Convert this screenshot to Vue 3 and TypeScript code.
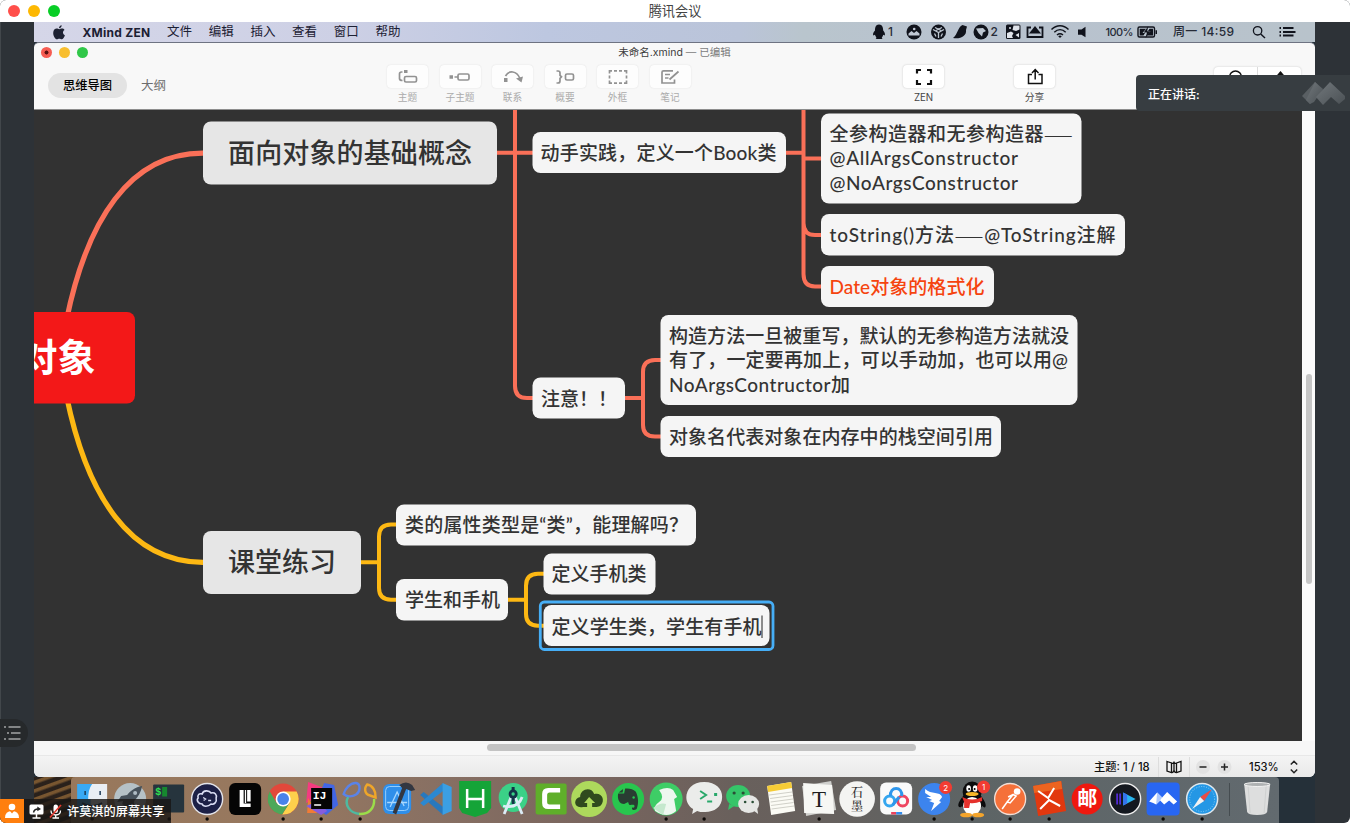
<script setup lang="ts">
interface Line { text: string; y: number; w: number }
interface Topic {
  x: number; y: number; w: number; h: number
  tx: number; size: number; kind: 'main' | 'sub' | 'root' | 'alert'
  lines: Line[]
}

const menus: string[] = ['文件', '编辑', '插入', '查看', '窗口', '帮助']

/* Splits a line so that long dashes can take the CJK face. */
const runs = (text: string): string[] => text.split(/(——)/).filter((s) => s.length > 0)

const topics: Topic[] = [
  { x: 203, y: 121.5, w: 294, h: 63, tx: 228, size: 27, kind: 'main', lines: [{ text: '面向对象的基础概念', y: 163, w: 244 }] },
  { x: 532.5, y: 132, w: 253.5, h: 41, tx: 540.5, size: 19, kind: 'sub', lines: [{ text: '动手实践，定义一个Book类', y: 159.7, w: 236 }] },
  {
    x: 821, y: 113.5, w: 260.5, h: 90, tx: 829.5, size: 19, kind: 'sub',
    lines: [
      { text: '全参构造器和无参构造器——', y: 140.8, w: 243 },
      { text: '@AllArgsConstructor', y: 165.4, w: 188.5 },
      { text: '@NoArgsConstructor', y: 190, w: 188.5 },
    ],
  },
  { x: 821, y: 214, w: 304, h: 41.5, tx: 829.5, size: 19, kind: 'sub', lines: [{ text: 'toString()方法——@ToString注解', y: 242, w: 286 }] },
  { x: 821, y: 266, w: 173, h: 41, tx: 829.5, size: 19, kind: 'alert', lines: [{ text: 'Date对象的格式化', y: 294, w: 155 }] },
  {
    x: 660.5, y: 315, w: 417, h: 90, tx: 669, size: 19, kind: 'sub',
    lines: [
      { text: '构造方法一旦被重写，默认的无参构造方法就没', y: 343, w: 400 },
      { text: '有了，一定要再加上，可以手动加，也可以用@', y: 367.4, w: 399 },
      { text: 'NoArgsContructor加', y: 391.8, w: 181 },
    ],
  },
  { x: 660.5, y: 416, w: 340.5, h: 41, tx: 669, size: 19, kind: 'sub', lines: [{ text: '对象名代表对象在内存中的栈空间引用', y: 443.6, w: 324 }] },
  { x: 532.5, y: 377.5, w: 92.5, h: 41, tx: 541, size: 19, kind: 'sub', lines: [{ text: '注意！！', y: 405.6, w: 76 }] },
  { x: 203, y: 531, w: 158, h: 63, tx: 228, size: 27, kind: 'main', lines: [{ text: '课堂练习', y: 572, w: 108 }] },
  { x: 396, y: 504.5, w: 300, h: 41, tx: 405, size: 19, kind: 'sub', lines: [{ text: '类的属性类型是“类”，能理解吗？', y: 532, w: 283 }] },
  { x: 396, y: 579, w: 112, h: 41.5, tx: 405, size: 19, kind: 'sub', lines: [{ text: '学生和手机', y: 607, w: 95 }] },
  { x: 543.5, y: 553.5, w: 112, h: 41, tx: 551.5, size: 19, kind: 'sub', lines: [{ text: '定义手机类', y: 581, w: 95 }] },
  { x: 543.5, y: 605, w: 226, h: 41, tx: 551.5, size: 19, kind: 'sub', lines: [{ text: '定义学生类，学生有手机', y: 634, w: 210 }] },
  { x: 20, y: 312, w: 115, h: 91.5, tx: 19.5, size: 38, kind: 'root', lines: [{ text: '对象', y: 371, w: 76 }] },
]
</script>

<template>
  <div class="meeting">
    <header class="titlebar">
      <div class="lights"><i class="red" /><i class="yellow" /><i class="green" /></div>
      <span class="title">腾讯会议</span>
    </header>

    <div class="stage">
      <main class="screen">
        <!-- system menu bar -->
        <div class="menubar">
          <svg class="apple" viewBox="0 0 12 15"><path d="M8.7 0.3C8.7 2 7.4 3.3 6 3.3 5.9 1.8 7.2 0.5 8.7 0.3ZM6.2 4.2C7 4.2 7.8 3.5 9 3.5 10 3.5 11 4 11.5 4.9 9.3 6.2 9.7 9.3 11.9 10.2 11.3 12 10 14.3 8.7 14.3 7.8 14.3 7.4 13.8 6.3 13.8 5.200 13.800 4.800 14.300 3.900 14.300 2.200 14.300 0.200 11 0.200 8 0.200 5.100 2 3.600 3.700 3.600 4.800 3.600 5.600 4.200 6.200 4.200Z" /></svg>
          <b class="app-name">XMind ZEN</b>
          <span v-for="m in menus" :key="m" class="menu">{{ m }}</span>
          <svg class="status" viewBox="865 22 450 20">
            <g fill="#10131c">
              <path d="M879 24.500C875.500 24.500 875 28 875 30.500 873.500 32 872.500 34 873.300 35.600L875 34.800C875.200 36 876 37 876.500 37.500 875.500 38 875.500 39 877 39H881.500C882.800 39 882.500 38 881.700 37.500 882.500 37 883 36 883.200 34.800L884.700 35.600C885.500 34 884.500 32 883.200 30.500 883.200 28 882.500 24.500 879 24.500Z" />
              <circle cx="914" cy="32" r="7.500" />
              <circle cx="938.500" cy="32" r="7.500" />
              <path d="M953 38C958 34 957.500 27.500 962.500 25L967 26.500 966 30C967 36 960 39.500 953 38Z" />
              <circle cx="981" cy="32" r="7.500" />
              <rect x="1006" y="24.500" width="14.500" height="14.500" rx="1.500" />
              <path d="M1078 29.500H1081.500L1085.500 26.800V37.300L1081.500 34.800H1078Z" />
            </g>
            <path d="M908.500 35.500V33.500L911.500 31 914 33 916.500 31 919.500 33.500V35.500Z" fill="#c0c8d4" /><circle cx="914.200" cy="29" r="1.300" fill="#c0c8d4" />
            <g fill="none" stroke="#bdc6d1" stroke-width="1.300">
              <path d="M933 29.500L938.500 32.500 944 29.500M938.500 32.500V38M935 27.500L941 30.500M942 27.500L936 30.500M934.500 33.500L936 36.500M942.500 33.500L941 36.500" />
            </g>
            <path d="M976 28.500L983 28 986 31 983 32.500 982 36.500 978.500 33Z" fill="#bdc6d1" />
            <path d="M1013.500 25.500H1019.500V29.500L1016 31 1012.500 30ZM1007 33L1011 31.500 1013.500 33 1012 36 1013 38H1007ZM1015.500 35L1019 33V37.500Z" fill="#dfe3ea" />
            <circle cx="1010" cy="28" r="1" fill="#dfe3ea" />
            <path d="M1031 27.500H1027.500V37H1042.500V27.500H1039" fill="none" stroke="#10131c" stroke-width="1.800" />
            <path d="M1035 26L1041 33.500H1029Z" fill="#10131c" />
            <g fill="none" stroke="#10131c" stroke-width="1.500">
              <path d="M1051.500 29.500C1056.500 24.500 1063.500 24.500 1068.500 29.500M1054.300 32.300C1057.800 29 1062.300 29 1065.700 32.300M1057 35C1059 33.300 1061 33.300 1063 35" />
            </g>
            <path d="M1058.200 36.200Q1060 34.800 1061.800 36.200L1060 38Z" fill="#10131c" />
            <rect x="1138" y="27" width="16.500" height="10" rx="1.500" fill="none" stroke="#10131c" stroke-width="1.400" />
            <path d="M1139.700 28.700H1146L1142.500 33H1145L1143.500 35.400H1139.700ZM1149.500 28.700H1153V35.400H1146.500L1150.500 31H1148ZM1155.500 30.200H1157V34H1155.500Z" fill="#10131c" />
            <path d="M1148.300 26L1143.800 32.500H1147L1145.500 38L1150.500 31.300H1147.200Z" fill="#10131c" />
            <circle cx="1257.600" cy="30.800" r="4.200" fill="none" stroke="#10131c" stroke-width="1.300" /><path d="M1260.700 34L1265 38" stroke="#10131c" stroke-width="1.500" />
            <path d="M1279.500 28H1281M1279.500 32H1281M1279.500 35.500H1281M1283 28H1293.500M1283 32H1295.500M1283 35.500H1293.500" stroke="#10131c" stroke-width="1.800" />
            <g class="status-text">
              <text x="888" y="36" font-size="12">1</text>
              <text x="990.500" y="36" font-size="12">2</text>
              <text x="1105.500" y="35.500" font-size="11" textLength="28">100%</text>
              <text x="1173" y="36" font-size="12" textLength="61">周一 14:59</text>
            </g>
          </svg>
        </div>

        <!-- mind map window -->
        <section class="window">
          <div class="doc-title">
            <div class="doc-lights"><i class="red" /><i class="yellow" /><i class="green" /></div>
            <span class="doc-name">未命名.xmind <em>— 已编辑</em></span>
          </div>
          <div class="toolbar">
            <span class="pill">思维导图</span>
            <span class="outline">大纲</span>
            <div class="tools">
              <div class="tool"><div class="btn"><svg viewBox="0 0 20 14"><path d="M4.500 2H3.500Q1.500 2 1.500 4V8.500Q1.500 10.500 4.500 10.500" /><path d="M6 0H9.500V3H6Z" class="solid" /><rect x="6.500" y="6.500" width="12" height="5.500" rx="1.500" /></svg></div><span>主题</span></div>
              <div class="tool"><div class="btn"><svg viewBox="0 0 20 14"><path d="M-0.500 5.300H3V8.700H-0.500Z" class="solid" /><path d="M4.500 7H8" /><rect x="8" y="4" width="11" height="6" rx="1.500" /></svg></div><span>子主题</span></div>
              <div class="tool"><div class="btn"><svg viewBox="0 0 20 14"><path d="M1 8H4.500V12H1Z" class="solid" /><path d="M2.500 6C6 0 13.500 0.500 17 8.500" /><path d="M13 8.500L20 6.500 18.500 12.500Z" class="solid" /></svg></div><span>联系</span></div>
              <div class="tool"><div class="btn"><svg viewBox="0 0 20 14"><path d="M1.500 1H3Q5 1 5 3V5.300L6.500 6.800 5 8.300V11Q5 13 3 13H1.500" /><rect x="10.500" y="4" width="8" height="6" rx="1.500" /></svg></div><span>概要</span></div>
              <div class="tool"><div class="btn"><svg viewBox="0 0 20 14"><path d="M1.500 3.500V0.800H4M16 0.800H18.500V3.500M18.500 10.500V13.200H16M4 13.200H1.500V10.500M6 0.800H9M11 0.800H14M6 13.200H9M11 13.200H14M1.500 5.500V8.500M18.500 5.500V8.500" /></svg></div><span>外框</span></div>
              <div class="tool"><div class="btn"><svg viewBox="0 0 20 14"><path d="M13 0.800H3.500Q2 0.800 2 2.300V13H14.500V9.500M5 4.500H10M5 8H8.500M9.500 9.500L18.500 1.500" /></svg></div><span>笔记</span></div>
            </div>
            <div class="tool zen dark"><div class="btn"><svg viewBox="0 0 20 14"><path d="M3 3.500V0H7M13 0H17V3.500M17 10V14H13M7 14H3V10" class="heavy" /></svg></div><span>ZEN</span></div>
            <div class="tool share dark"><div class="btn"><svg viewBox="0 0 20 14"><path d="M7 4.500H3.500V13.500H17V4.500H13.500M10.200 9.500V0M7 3L10.200-0.500 13.500 3" /></svg></div><span>分享</span></div>
            <div class="pair">
              <svg viewBox="0 0 87 24"><path d="M43.500 0V24" stroke="#dcdcdc" /><circle cx="21.500" cy="10" r="6" fill="none" stroke="#111" stroke-width="1.500" /><path d="M61 10.500L66.500 4 72 10.500Z" fill="#111" /></svg>
            </div>
          </div>

          <div class="workspace">
            <svg class="canvas" viewBox="34 110 1268 631">
              <g fill="none" stroke="#fa7058" stroke-width="4">
                <path stroke-width="5.200" d="M66.500 320C87 220 130 153 203 153.200" />
                <path d="M497 152.800H533M515 105V386Q515 398 527 398H533M786 152.800H803.500M803.500 105V274Q803.500 286.500 815 286.500H821M803.500 158.500H821M803.500 223Q803.500 235 815 235H821" />
                <path d="M625 398H643M661 360H655Q643 360 643 372V425Q643 436.500 655 436.500H661" />
              </g>
              <g fill="none" stroke="#fdb813" stroke-width="4">
                <path stroke-width="5.200" d="M66.500 396C87 496 130 562 203 562.300" />
                <path d="M361 562.300H379M396 524.500H391Q379 524.500 379 536.500V588Q379 599.700 391 599.700H396M508 599.700H526M544 573.700H538Q526 573.700 526 585.700V614Q526 625.700 538 625.700H544" />
              </g>
              <g v-for="(t, i) in topics" :key="i" :class="['topic', t.kind]">
                <rect :x="t.x" :y="t.y" :width="t.w" :height="t.h" rx="8" />
                <text v-for="l in t.lines" :key="l.text" :x="t.tx" :y="l.y" :font-size="t.size" :textLength="l.w"><tspan v-for="(r, k) in runs(l.text)" :key="k" :class="{ dash: r === '——' }">{{ r }}</tspan></text>
              </g>
              <rect x="540.300" y="602" width="232.700" height="47.500" rx="4" fill="none" stroke="#46aef6" stroke-width="2.800" />
              <path d="M762 615.500V638" stroke="#222" stroke-width="1" />
            </svg>
            <div class="vscroll"><i /></div>
          </div>
          <div class="hscroll"><i /></div>

          <div class="statusbar">
            <span class="count">主题: 1 / 18</span>
            <span class="map"><svg viewBox="0 0 16 14"><path d="M1 1.500L5.500 3V12.500L1 11ZM5.500 3Q8 4 8 1.500V10Q8 12.500 5.500 12.500M8 1.500Q8 4 10.500 3L15 1.500V11L10.500 12.500Q8 12.500 8 10M10.500 3V12.500" /></svg></span>
            <span class="zoom">
              <svg viewBox="0 0 36 16"><circle cx="7" cy="8" r="7" /><circle cx="28.500" cy="8" r="7" /><path d="M3.500 8H10.500M25 8H32M28.500 4.500V11.500" /></svg>
            </span>
            <span class="percent">153%</span>
            <svg class="stepper" viewBox="0 0 8 14"><path d="M0.800 4.500L4 1.300 7.200 4.500M0.800 9.500L4 12.700 7.200 9.500" /></svg>
          </div>
        </section>

        <!-- dock -->
        <footer class="desktop">
          <div class="dock">
            <svg viewBox="0 0 38 46"><rect x="4" y="7" width="15" height="29" fill="#38a9f4" /><path d="M19 7H34V36H19C17 31 17.500 26 17.500 22H15C15 16 16 11 19 7Z" fill="#e9eef4" /><path d="M12 14V18M27 14V18M9 26Q19 32 29 26" stroke="#1b3a58" stroke-width="1.500" fill="none" /><circle class="dot" cx="19" cy="42" r="1.700" /></svg>
            <svg viewBox="0 0 38 46"><circle cx="19" cy="22" r="16" fill="#b5c1c6" /><path d="M31 9C24 10 19 14 16 18L10 19 6 25 12 24 11 27 16 31 18 29 19 35 23 30 23 24C27 20 30 15 31 9Z" fill="#47525b" /><circle cx="24" cy="16" r="2" fill="#aebbc3" /></svg>
            <svg viewBox="0 0 38 46"><rect x="3" y="7.500" width="31" height="28" rx="1" fill="#26343d" /><text x="5" y="18" font-size="10" class="mono" fill="#2fe052">$</text><rect x="12" y="10" width="5" height="9.500" fill="#16882f" /><circle class="dot" cx="19" cy="42" r="1.700" /></svg>
            <svg viewBox="0 0 38 46"><circle cx="19" cy="22" r="15.500" fill="#1d2046" stroke="#e4e4ea" stroke-width="1.400" /><path d="M14 17C15 13 21 13 23 16 27 15 29 18 28 21 29 25 26 28 23 27 20 30 15 30 14 27 10 27 8 23 10 21 9 18 11 16 14 17Z" fill="none" stroke="#d9dcf2" stroke-width="1.600" /><path d="M15 20.500L17.500 22 15.500 23.500M20 23.500H23" stroke="#d9dcf2" stroke-width="1.300" fill="none" /><circle class="dot" cx="19" cy="42" r="1.700" /></svg>
            <svg viewBox="0 0 38 46"><rect x="3" y="6" width="32" height="32" rx="6" fill="#050505" /><path d="M13.500 13H17.500V26.500H24.500V30H13.500ZM18.700 13H20V26H18.700ZM21 13H24.500V24.500H21Z" fill="#fff" /></svg>
            <svg viewBox="0 0 38 46"><circle cx="19" cy="22" r="15.500" fill="#e2483b" /><path d="M19 14.500H32.500A15.500 15.500 0 0 1 18 37.500L25.500 25.700Z" fill="#fdd04c" /><path d="M5.600 14.200L12.500 26 19 29.500 25 26.500 18 37.500A15.500 15.500 0 0 1 5.600 14.200Z" fill="#4ca85a" /><circle cx="19" cy="22" r="7.500" fill="#fff" /><circle cx="19" cy="22" r="5.900" fill="#4a83ea" /><circle class="dot" cx="19" cy="42" r="1.700" /></svg>
            <svg viewBox="0 0 38 46"><path d="M5 5L21 11 11 22 3 26Z" fill="#f43b80" /><path d="M5 21L14 36 4 36Z" fill="#f17b35" /><path d="M21 6L31 8 35 28 23 38 11 30Z" fill="#4266e5" /><path d="M3 29L15 24 24 34 18 38Z" fill="#855dde" /><rect x="8" y="11" width="21" height="21" fill="#050505" /><text x="9.500" y="22" font-size="11.500" class="mono" fill="#fff">IJ</text><path d="M11 28H18" stroke="#fff" stroke-width="1.500" /><circle class="dot" cx="18" cy="42" r="1.700" /></svg>
            <svg viewBox="0 0 38 46"><g fill="none" stroke-width="2.400"><path d="M2.500 17C4 12 9 5.500 15 6 20 7 19 15 15 17.500 11 20 6 20 2.500 17Z" stroke="#5a83e8" /><path d="M26 7.500C31 8 35 14 34.500 20.500L29 18.500C23 17 23 11 26 7.500Z" stroke="#efa629" /><path d="M7 20C3 27 8 36.500 19 37" stroke="#4fb9a0" /><path d="M18 37C28 37.500 33.500 31 33 22" stroke="#9bdd4a" /></g><circle class="dot" cx="19" cy="42" r="1.700" /></svg>
            <svg viewBox="0 0 38 46"><rect x="4" y="7" width="28" height="30" rx="6" fill="#2f8fea" /><rect x="6.500" y="9.500" width="23" height="24" rx="4" fill="none" stroke="#95cdfb" /><path d="M11 30L18 15 25 29M8 25.500H28" stroke="#a8d8ff" stroke-width="1.300" fill="none" /><path d="M17 37.500L13.500 35.500 23 11 20 8Q27 3 33 8L36 13 32 14 27 12Z" fill="#333741" /></svg>
            <svg viewBox="0 0 38 46"><path d="M3 18L6.500 15 26 30V38Z" fill="#2878bd" /><path d="M3 26L6.500 29 26 14V6Z" fill="#2b88d1" /><path d="M25.500 6L34.500 10V34L25.500 38Z" fill="#3b9fe3" /></svg>
            <svg viewBox="0 0 38 46"><path d="M3 4H35V31L31 36 19 40 6 36 3 31Z" fill="#15a438" /><path d="M11 12V31M27 12V31M11 22H27" stroke="#fff" stroke-width="2.500" /></svg>
            <svg viewBox="0 0 38 46"><circle cx="19" cy="20.500" r="14.500" fill="#3bd187" /><path d="M17 20L10 37M21 20L28 37M9 29Q24 32 28 20" stroke="#dcecf6" stroke-width="2.800" fill="none" /><path d="M19 10V27" stroke="#143248" stroke-width="3" /><circle cx="19" cy="17" r="4.500" fill="#143248" /><circle cx="19" cy="17" r="1.700" fill="#3bd187" /></svg>
            <svg viewBox="0 0 38 46"><rect x="3.500" y="6.500" width="31" height="31" rx="2" fill="#5faf2a" /><path d="M28 11H16Q10 11 10 17V26Q10 32 16 32H28V27.500H17.500Q15 27.500 15 25V18Q15 15.500 17.500 15.500H28Z" fill="#fff" /></svg>
            <svg viewBox="0 0 38 46"><circle cx="19" cy="22" r="18" fill="#add95c" /><path d="M13 30C3 32 3 21 10 20 10 12 21 9 24 17 32 15 35 23 31 28 29 30 27 30 22 30V26H25L19 20 14 26H17V30Z" fill="#304a1e" /></svg>
            <svg viewBox="0 0 38 46"><circle cx="19" cy="22" r="16" fill="#28c64e" /><path d="M16 11.500L15 16.500H9C8 22 10 27 15 27L19 25C20 30 22 27 25 28 26 30 25 31 23 30.500 22 33 25 34 27.500 32 30 26 29 19 26.500 14.500 24 12 20 11 16 11.500ZM14 12L9.500 15.500H13.500Z" fill="#293d32" /><circle cx="24.500" cy="20.500" r="1.200" fill="#28c64e" /></svg>
            <svg viewBox="0 0 38 46"><circle cx="19" cy="22" r="16.500" fill="#3ecd66" /><path d="M12 13Q21 9 26 13L30 20 27 22 29 34Q20 42 8 34 6 29 12 25 18 21 12 13Z" fill="#edf7ef" /><path d="M6 31Q13 25 19 27L16 38Z" fill="#c4e8cd" /><circle class="dot" cx="19" cy="42" r="1.700" /></svg>
            <svg viewBox="0 0 38 46"><path d="M19 5C31 5 37 12 37 20 37 30 29 35 20 35 16 35 14 35 12 34L7 37 8 32C-4 25 0 5 19 5Z" fill="#ebecea" /><path d="M15 14L21 18 15 22M22 24.500H27" stroke="#29a86a" stroke-width="1.900" fill="none" /><rect x="29" y="16" width="3" height="3" fill="#29a86a" /><circle class="dot" cx="19" cy="42" r="1.700" /></svg>
            <svg viewBox="0 0 38 46"><ellipse cx="14" cy="19" rx="12" ry="11" fill="#36c569" /><path d="M5 27L4 33 10 29Z" fill="#36c569" /><ellipse cx="24.500" cy="27" rx="10.500" ry="9" fill="#e6e7e5" /><path d="M30 34L34 37 33 31Z" fill="#e6e7e5" /><g fill="#2a4e36"><circle cx="10" cy="16" r="1.600" /><circle cx="19" cy="16" r="1.600" /><circle cx="21" cy="25" r="1.300" /><circle cx="28.500" cy="25" r="1.300" /></g></svg>
            <svg viewBox="0 0 38 46"><path d="M5 9L29 5 33 34 9 38Z" fill="#fbfbf5" /><path d="M5 9L29 5 30 11 6 15Z" fill="#f6cc36" /><path d="M7 18L30 15M8 21.500L30.500 18.500M8.500 25L31 22M9 28.500L31.500 25.500M9.500 32L32 29" stroke="#bdbdb5" stroke-width="0.700" /></svg>
            <svg viewBox="0 0 38 46"><path d="M2 9L31 4 36 33 6 39Z" fill="#cfcfcc" /><path d="M3 6L32 8 34 37 4 36Z" fill="#f7f7f4" /><text x="19" y="30" font-size="23" class="serif" text-anchor="middle" fill="#1e1e1e">T</text><circle class="dot" cx="19" cy="42" r="1.700" /></svg>
            <svg viewBox="0 0 38 46"><circle cx="19" cy="22" r="17.800" fill="#f4f4f2" /><text x="19" y="20" font-size="12" class="serif ink" text-anchor="middle" fill="#222">石</text><text x="19" y="33.500" font-size="12" class="serif ink" text-anchor="middle" fill="#222">墨</text></svg>
            <svg viewBox="0 0 38 46"><rect x="3" y="5.500" width="32" height="32" rx="6" fill="#fafafa" /><g fill="none" stroke-width="3"><circle cx="12.500" cy="24" r="5" stroke="#35a6ef" /><circle cx="25.500" cy="24" r="5" stroke="#ef4661" /><path d="M13.500 19C12 9 26 9 24.500 19M22 20L15.500 28" stroke="#2e96ec" /></g><path d="M14 35H19V37.500H14Z" fill="#ea425c" /><path d="M19 35H25V37.500H19Z" fill="#328cec" /></svg>
            <svg viewBox="0 0 38 46"><circle cx="19" cy="22" r="16" fill="#3c84ee" /><path d="M10 12C16 18 25 14 27 20L24 24 26 25 16 34 19 26 14 24 17 23 11 20 16 20 10 16Z" fill="#fff" /><circle cx="30.500" cy="10.500" r="6.500" fill="#f23c32" /><text x="30.500" y="13.500" font-size="8" class="badge" text-anchor="middle" fill="#fff">2</text><circle class="dot" cx="19" cy="42" r="1.700" /></svg>
            <svg viewBox="0 0 38 46"><path d="M10 19C1 30 7 32 9 29 11 34 27 34 29 29 33 33 35 28 28 19Z" fill="#0b0b0c" /><ellipse cx="19" cy="15" rx="9.500" ry="10.500" fill="#0b0b0c" /><ellipse cx="19" cy="29" rx="9" ry="9" fill="#fff" /><ellipse cx="15.500" cy="11.500" rx="2.300" ry="3.200" fill="#fff" /><ellipse cx="22" cy="11.500" rx="2.300" ry="3.200" fill="#fff" /><circle cx="16" cy="12" r="1" /><circle cx="21.500" cy="12" r="1" /><ellipse cx="19" cy="17" rx="6.500" ry="2" fill="#f5b629" /><path d="M9 20Q19 25 29 20V24Q21 27 17 26L16 31H11V25Z" fill="#e5312c" /><ellipse cx="13" cy="38" rx="6" ry="2.300" fill="#f4a52c" /><ellipse cx="25" cy="38" rx="6" ry="2.300" fill="#f4a52c" /><circle cx="30.500" cy="10" r="6.500" fill="#f23c32" /><text x="30.500" y="13" font-size="8" class="badge" text-anchor="middle" fill="#fff">1</text><circle class="dot" cx="19" cy="42" r="1.700" /></svg>
            <svg viewBox="0 0 38 46"><circle cx="19" cy="22" r="15.500" fill="#f57039" stroke="#f3ded5" stroke-width="1.300" /><path d="M11 32L16 25M16 25L22 17.500 25 19 19 26ZM17 20L22 17.500" stroke="#fff" stroke-width="1.500" fill="none" /><circle cx="26" cy="14.500" r="3.300" fill="#fff" /><circle class="dot" cx="19" cy="42" r="1.700" /></svg>
            <svg viewBox="0 0 38 46"><path d="M3 9L31 4 36 34 8 39Z" fill="#e2380f" /><path d="M3 9L31 4 32 12 4 16Z" fill="#ec6420" /><path d="M8 14L18 21 24 11M10 32L19 23 30 29" fill="none" stroke="#fff" stroke-width="2" /><circle class="dot" cx="19" cy="42" r="1.700" /></svg>
            <svg viewBox="0 0 38 46"><circle cx="19" cy="22" r="15.500" fill="#ef180f" /><text x="19" y="29" font-size="20" class="mail" text-anchor="middle" fill="#fff">邮</text></svg>
            <svg viewBox="0 0 38 46"><circle cx="19" cy="22" r="15.500" fill="#14181f" stroke="#eee" stroke-width="1.400" /><path d="M17 15.500L29.500 22 17 28.500Z" fill="#29b6f0" /><path d="M17 15.500L21 17.500V26.500L17 28.500Z" fill="#3573ed" /><path d="M11 16.500V27.500M14 16.500V27.500" stroke="#532bd4" stroke-width="1.800" /></svg>
            <svg viewBox="0 0 38 46"><rect x="2.500" y="5.500" width="33" height="33" rx="4" fill="#2866f2" /><path d="M5 24.500L13 15.500 18 20.500 23 15 33 24.500 29.500 27.500 25 23.500 20 27.500 16 23.500 12 27.500 9 26Z" fill="#fff" /><path d="M13 15.500L18 20.500 15.500 24 12 27.500Z" fill="#adc9ff" /><circle class="dot" cx="19" cy="42" r="1.700" /></svg>
            <svg viewBox="0 0 38 46"><circle cx="19" cy="22" r="15.500" fill="#2497e5" stroke="#e0e8ed" stroke-width="1.500" /><circle cx="19" cy="22" r="12.500" fill="none" stroke="#8bcff4" stroke-dasharray="1 1.500" /><path d="M29 12L17 20 21 24Z" fill="#e94d47" /><path d="M9 32L17 20 21 24Z" fill="#f2f2f2" /><circle class="dot" cx="19" cy="42" r="1.700" /></svg>
            <i class="divider" />
            <svg viewBox="0 0 38 46"><path d="M6 7H32L29 35Q28 38 19 38 10 38 9 35Z" fill="#dddede" /><path d="M10 9L12 36M28 9L26 36" stroke="#cfd1d1" fill="none" /><ellipse cx="19" cy="7.500" rx="13" ry="2" fill="#aeb1b2" stroke="#f2f2f2" /></svg>
          </div>
        </footer>
      </main>

      <div class="speaking">
        <span>正在讲话:</span>
        <svg viewBox="0 0 45 26">
          <defs><linearGradient id="peak" x1="0" y1="0" x2="1" y2="1"><stop offset="0" stop-color="#72787c" /><stop offset="1" stop-color="#4a5054" /></linearGradient></defs>
          <path d="M1 16L14 2 22 9 13 22 9 24Z" fill="#595f63" /><path d="M14 2L22 10 15 17 9 24 5 20Z" fill="url(#peak)" /><path d="M15 17L29 2 44 16 44 19 38 24 30 17 22 25Z" fill="url(#peak)" />
        </svg>
      </div>
      <div class="drawer"><svg viewBox="0 0 17 16"><path d="M0 2H2M4.500 2H16.500M3 8H5M7 8H16.500M0 14H2M4.500 14H16.500" /></svg></div>
      <div class="sharer">
        <svg class="person" viewBox="0 0 24 24"><circle cx="12" cy="8" r="3.300" /><path d="M5 19Q5 12 12 12 19 12 19 19Z" /><path d="M10 12L12 14.500 14 12" fill="#ff7f0e" /></svg>
        <svg class="share-ico" viewBox="0 0 15 15"><rect x="0.500" y="0.500" width="14" height="10" rx="1.500" fill="#fff" /><path d="M7.500 10V14M3.500 14H11.500" stroke="#fff" stroke-width="1.500" /><path d="M4.500 8.500C5 6 7 5 9 5" fill="none" stroke="#222" stroke-width="1.400" /><path d="M8.300 2.500L12 5 8.300 7.300Z" fill="#222" /></svg>
        <svg class="mic" viewBox="0 0 13 15"><rect x="4.500" y="0.500" width="4.500" height="8.500" rx="2.200" fill="#fff" /><path d="M2 6.500Q2 11 6.700 11 11.500 11 11.500 6.500M6.700 11V14M3.500 14H10" fill="none" stroke="#fff" stroke-width="1.300" /><path d="M1 13.500L12 1" stroke="#e5382d" stroke-width="1.600" /></svg>
        <span>许莫淇的屏幕共享</span>
      </div>
    </div>
  </div>
</template>

<style>
html, body { margin: 0; overflow: hidden; }
</style>

<style scoped>
.meeting { width: 1350px; height: 823px; display: flex; flex-direction: column; overflow: hidden; font-family: Inter, "Noto Sans CJK SC", sans-serif; background: #2d3237; color: #111; border-radius: 6px; }
.titlebar { height: 22px; flex: none; background: #fff; display: grid; grid-template-columns: 1fr auto 1fr; align-items: center; }
.lights { display: flex; gap: 8px; padding-left: 8px; }
.lights i { width: 12px; height: 12px; border-radius: 50%; }
.red { background: #ff4f4a; }
.yellow { background: #fdb802; }
.green { background: #08ce26; }
.title { font-size: 13.200px; line-height: 20px; color: #444; grid-column: 2; }
.stage { position: relative; flex: 1; display: flex; padding: 0 35px 0 34px; box-shadow: inset 1px 0 #42474b; }
.screen { width: 1281px; height: 801px; display: flex; flex-direction: column; background: #253039; }

.menubar { height: 20px; flex: none; display: flex; align-items: center; background: linear-gradient(90deg, #d5d6e8 0, #cdd0e5 24%, #bdc7e0 40%, #bac4d9 55%, #b9c5cd 60%, #b8c2cf 72%, #b8c3cb); color: #1c2033; }
.apple { width: 12px; height: 15px; margin-left: 19px; fill: #1e2233; }
.app-name { font-size: 12px; width: 68px; margin-left: 17.500px; margin-right: 16.500px; white-space: nowrap; letter-spacing: .25px; font-weight: 700; }
.menu { font-size: 12.500px; width: 25px; margin-right: 16.700px; line-height: 20px; white-space: nowrap; }
.status { width: 450px; height: 20px; margin-left: auto; flex: none; }
.status-text { fill: #262b37; font-weight: 500; }

.window { height: 735px; flex: none; box-sizing: border-box; border-top: 1px solid #6e7382; border-radius: 5px 5px 6px 6px; overflow: hidden; background: #f8f8f8; display: flex; flex-direction: column; }
.doc-title { height: 20px; display: grid; grid-template-columns: 1fr auto 1fr; align-items: center; }
.doc-lights { display: flex; gap: 7px; padding-left: 7px; margin-top: -2px; }
.doc-lights i { width: 11px; height: 11px; border-radius: 50%; }
.doc-lights .red { background: radial-gradient(circle, #5c1010 0 1.700px, #f65c52 2.300px); }
.doc-lights .yellow { background: #f8be2f; }
.doc-lights .green { background: #30c748; }
.doc-name { font-size: 10.500px; color: #3c3c3c; line-height: 18px; }
.doc-name em { font-style: normal; color: #7c7c7c; }
.toolbar { height: 47px; flex: none; display: flex; align-items: flex-start; box-sizing: border-box; border-bottom: 1px solid #8e8e8e; }
.pill { margin: 10px 0 0 14px; width: 79px; height: 25px; border-radius: 13px; background: #e3e3e3; text-align: center; font-size: 12.300px; font-weight: 500; line-height: 25px; color: #000; }
.outline { margin: 10px 0 0 14px; width: 26px; font-size: 12.500px; line-height: 25px; color: #6c6c6c; }
.tools { display: flex; gap: 11.500px; margin-left: 220px; }
.tool { width: 41px; margin-top: 2px; display: flex; flex-direction: column; align-items: center; }
.btn { width: 41px; height: 23px; border-radius: 4px; background: #fdfdfd; box-shadow: 0 0 1.500px #dadada; display: flex; align-items: center; justify-content: center; }
.btn svg { width: 20px; height: 14px; overflow: visible; fill: none; stroke: #929292; stroke-width: 1.700; }
.btn .solid { fill: #929292; stroke: none; }
.tool span { font-size: 9.700px; line-height: 14px; margin-top: 2.500px; color: #ababab; white-space: nowrap; }
.dark .btn { background: #fff; box-shadow: 0 0 2px #c4c4c4; }
.dark .btn svg { stroke: #111; stroke-width: 1.500; }
.dark .btn .heavy { stroke-width: 2.200; }
.tool.dark span { color: #444; }
.zen { margin-left: 212.500px; }
.share { margin-left: 70px; }
.pair { width: 87px; height: 24px; margin: 4px 0 0 159px; background: #fff; border-radius: 4px; box-shadow: 0 0 2px #c4c4c4; }
.pair svg { display: block; width: 87px; height: 24px; }

.workspace { height: 631px; flex: none; display: flex; }
.canvas { display: block; width: 1268px; height: 631px; background: #323232; flex: none; }
.topic text { font-family: Lato, "Noto Sans CJK SC", sans-serif; fill: #333; font-weight: 500; }
.topic .dash { font-family: "Noto Sans CJK SC", sans-serif; font-size: 17px; font-weight: 400; }
.topic rect { fill: #f5f5f5; }
.main rect { fill: #e6e6e6; }
.root rect { fill: #f31818; }
.root text { fill: #fff; font-weight: 700; }
.alert text { fill: #f5440f; }
.vscroll { flex: 1; background: #fbfbfb; }
.vscroll i { display: block; width: 6px; height: 210px; margin: 264px 0 0 4px; border-radius: 3px; background: #c6c6c6; }
.hscroll { height: 14px; flex: none; background: #f7f7f7; border-bottom: 1px solid #e8e8e8; }
.hscroll i { display: block; width: 429px; height: 7px; margin: 3px 0 0 453px; border-radius: 4px; background: #c3c3c3; }
.statusbar { flex: 1; display: flex; align-items: center; background: linear-gradient(#f4f4f4, #e9e9e9); }
.count { margin-left: 1060px; width: 57px; font-size: 11.300px; font-weight: 500; white-space: nowrap; line-height: 18px; }
.map { width: 30px; height: 20px; margin-left: 7px; border: solid #ddd; border-width: 0 1px; display: flex; align-items: center; justify-content: center; }
.map svg { width: 16px; height: 14px; fill: none; stroke: #111; stroke-width: 1.300; }
.zoom { margin-left: 6px; height: 16px; }
.zoom svg { width: 36px; height: 16px; display: block; fill: #e2e2e2; stroke: none; }
.zoom svg path { stroke: #222; stroke-width: 1.500; fill: none; }
.percent { margin-left: 17px; width: 30px; font-size: 11.200px; font-weight: 500; }
.stepper { margin-left: 11px; width: 8px; height: 14px; fill: none; stroke: #222; stroke-width: 1.500; }

.desktop { height: 46px; flex: none; padding-left: 37px; background: linear-gradient(90deg, transparent 40px, #253039 40px), repeating-linear-gradient(160deg, #2a211b 0 3px, #785630 4px 6px, #2d231c 8px); }
.dock { width: 1208px; height: 46px; background: linear-gradient(90deg, #98785c 0, #97785f 18%, #887063 30%, #79655e 43%, #69605c 55%, #66615e 63%, #5d6465 75%, #626a6f); border-radius: 4px 4px 0 0; display: flex; padding-left: 2px; box-sizing: border-box; }
.dock svg { width: 38.270px; height: 46px; flex: none; }
.dot { fill: #0b0806; }
.divider { width: 1px; height: 33px; margin: 6px 8px 0 8px; background: #454c50; }
.mono { font-family: "Liberation Mono", monospace; font-weight: 700; }
.serif { font-family: "Liberation Serif", "Noto Serif CJK SC", "Noto Sans CJK SC", serif; }
.ink { font-weight: 500; }
.mail { font-family: "Noto Sans CJK SC", sans-serif; font-weight: 700; }
.badge { font-family: Inter, sans-serif; }

.speaking { position: absolute; left: 1136px; top: 53px; width: 214px; height: 36px; border-radius: 4px 0 0 4px; background: #373d41; color: #fff; display: flex; align-items: center; justify-content: space-between; font-size: 12px; font-weight: 500; }
.speaking span { margin-left: 12px; }
.speaking svg { width: 45px; height: 26px; margin-right: 4px; }
.drawer { position: absolute; left: 0; top: 697px; width: 28px; height: 28px; border-radius: 0 14px 14px 0; background: #26292b; }
.drawer svg { width: 17px; height: 16px; margin: 6px 0 0 4px; fill: none; stroke: #a2a4a5; stroke-width: 1.700; }
.sharer { position: absolute; left: 0; bottom: 0; width: 171px; height: 24px; background: rgba(24, 22, 21, .82); color: #fff; display: flex; align-items: center; font-size: 12.200px; font-weight: 500; white-space: nowrap; }
.person { width: 24px; height: 24px; background: #ff7f0e; fill: #fff; }
.share-ico { width: 15px; height: 15px; margin-left: 5px; }
.mic { width: 13px; height: 15px; margin: 0 5px 0 5px; }
</style>
